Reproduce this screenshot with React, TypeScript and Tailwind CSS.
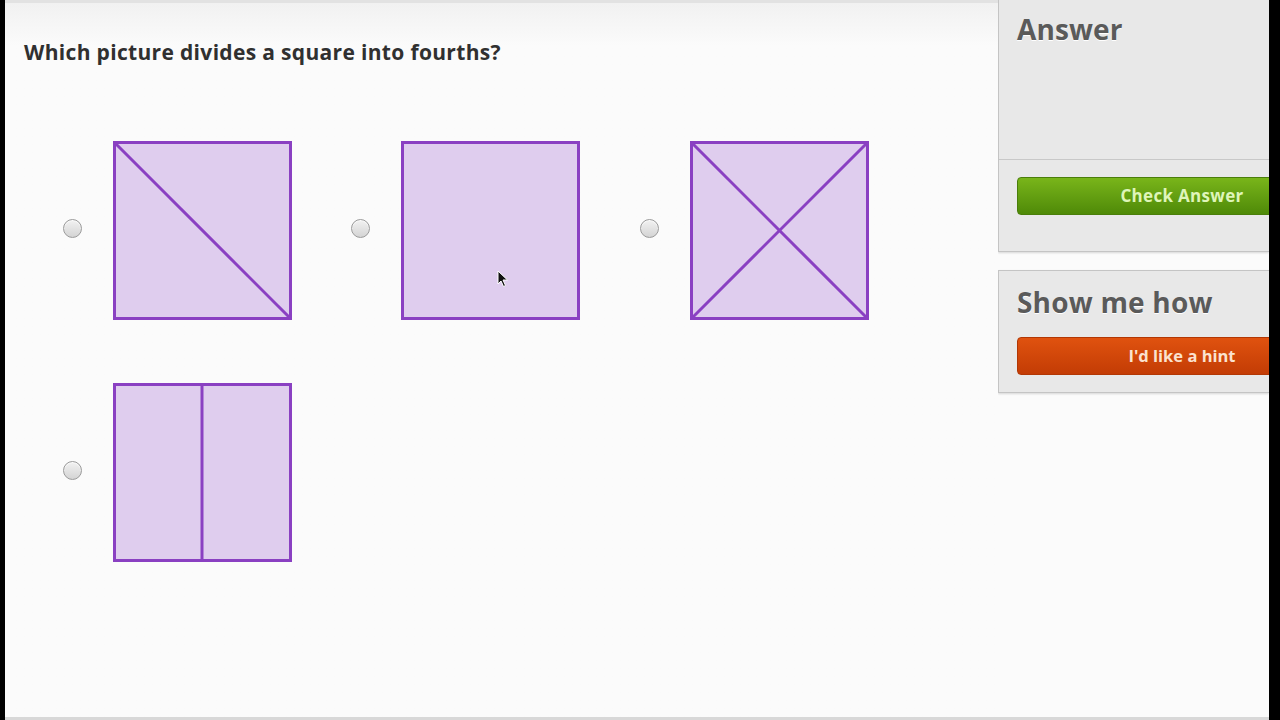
import type { ReactNode } from 'react';

type Kind = 'diagonal' | 'plain' | 'cross' | 'half';

const STROKE = '#8a40c2';
const FILL = '#dfcdee';

const Square = ({ kind }: { kind: Kind }) => (
  <svg width="179" height="179" viewBox="0 0 179 179" className="block">
    <rect x="1.5" y="1.5" width="176" height="176" fill={FILL} stroke={STROKE} strokeWidth="3" />
    {kind === 'diagonal' && <line x1="2" y1="2" x2="177" y2="177" stroke={STROKE} strokeWidth="3" />}
    {kind === 'cross' && (
      <>
        <line x1="2" y1="2" x2="177" y2="177" stroke={STROKE} strokeWidth="3" />
        <line x1="177" y1="2" x2="2" y2="177" stroke={STROKE} strokeWidth="3" />
      </>
    )}
    {kind === 'half' && <line x1="89" y1="2" x2="89" y2="177" stroke={STROKE} strokeWidth="3" />}
  </svg>
);

const Radio = () => (
  <span className="block mb-[5px] w-[19px] h-[19px] rounded-full border border-[#9a9a9a] bg-gradient-to-b from-[#f2f2f2] to-[#d4d4d4] shadow-[inset_0_1px_1px_rgba(255,255,255,0.8)]" />
);

const Choice = ({ kind }: { kind: Kind }) => (
  <div className="flex items-center gap-[31px] pl-px">
    <Radio />
    <Square kind={kind} />
  </div>
);

const Panel = ({ children, className }: { children: ReactNode; className?: string }) => (
  <div className={`bg-[#e8e8e8] border-l border-b border-[#c4c4c4] shadow-[0_1px_2px_rgba(0,0,0,0.15)] ${className ?? ''}`}>
    {children}
  </div>
);

const Cursor = () => (
  <svg width="12" height="18" viewBox="0 0 12 18" className="absolute left-[492px] top-[267px]">
    <path d="M1 1 L1 14 L4 11 L6.5 16.5 L8.5 15.5 L6 10 L10.5 10 Z" fill="#111" stroke="#fff" strokeWidth="1" />
  </svg>
);

export default function App() {
  return (
    <div
      className="w-[1280px] h-[720px] flex bg-black overflow-hidden"
      style={{ fontFamily: '"Open Sans", Lato, Arial, sans-serif' }}
    >
      <div className="w-[5px] shrink-0" />
      <div className="flex-1 flex bg-[#fbfbfb] border-b-[3px] border-[#d8d8d8]">
        <main className="relative flex-1 border-t-[3px] border-[#e2e2e2] bg-gradient-to-b from-[#f1f1f1] to-[#fbfbfb] to-[6%]">
          <h1 className="pl-[19px] pt-[36px] text-[21px] font-bold text-[#303030] leading-[26px] tracking-[0.33px]">
            Which picture divides a square into fourths?
          </h1>
          <div className="grid grid-cols-[288px_289px_288px] gap-y-[63px] pl-[57px] pt-[76px]">
            <Choice kind="diagonal" />
            <Choice kind="plain" />
            <Choice kind="cross" />
            <Choice kind="half" />
          </div>
          <Cursor />
        </main>
        <aside className="w-[271px] shrink-0 overflow-hidden">
          <Panel className="h-[252px]">
            <div className="h-[160px] border-b border-[#c8c8c8] pl-[18px] pt-[8px]">
              <h2 className="text-[28px] font-bold text-[#5a5a5a] tracking-[0.1px] [text-shadow:0_1px_0_#fff]">Answer</h2>
            </div>
            <div className="pl-[18px] pt-[17px]">
              <button className="w-[330px] h-[38px] rounded-[4px] bg-gradient-to-b from-[#79b51a] to-[#4f8a08] border border-[#4a7e0a] text-[#dff5b9] text-[17px] font-bold tracking-[0.3px]">
                Check Answer
              </button>
            </div>
          </Panel>
          <Panel className="mt-[18px] h-[123px] border-t pl-[18px] pt-[12px]">
            <h2 className="text-[28px] font-bold text-[#5a5a5a] leading-[38px] tracking-[0.2px] [text-shadow:0_1px_0_#fff]">Show me how</h2>
            <button className="mt-[16px] w-[330px] h-[38px] rounded-[4px] bg-gradient-to-b from-[#e0520f] to-[#c33c05] border border-[#b23704] text-[#fbe2cf] text-[16.5px] font-bold">
              I'd like a hint
            </button>
          </Panel>
        </aside>
      </div>
      <div className="w-[11px] shrink-0" />
    </div>
  );
}
